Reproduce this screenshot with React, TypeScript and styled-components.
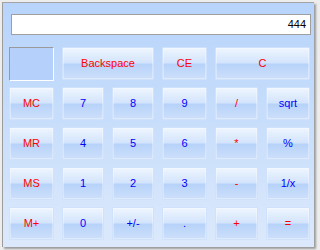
import styled, { createGlobalStyle } from "styled-components";

const GlobalStyle = createGlobalStyle`
  html, body {
    margin: 0;
    padding: 0;
    background: #ededed;
  }
  body {
    width: 320px;
    height: 250px;
    overflow: hidden;
    font-family: "Liberation Sans", Arial, sans-serif;
  }
`;

const Window = styled.div`
  box-sizing: border-box;
  margin: 2px 0 0 2px;
  width: 312px;
  height: 245px;
  padding: 11px 3px 0 6px;
  border-left: 1px solid #9c9c9c;
  border-top: 1px solid #a4a4a4;
  background: linear-gradient(180deg, #b8d4fb 0%, #c6ddfb 45%, #dce9fc 100%);
  box-shadow: 2px 2px 2px rgba(0, 0, 0, 0.35);
`;

const Display = styled.div`
  box-sizing: border-box;
  margin-left: 2px;
  height: 21px;
  border: 1px solid #9f9f9f;
  background: #ffffff;
  color: #000000;
  font-size: 11px;
  line-height: 19px;
  text-align: right;
  padding-right: 4px;
`;

const Keypad = styled.div`
  margin-top: 12px;
  display: grid;
  grid-template-columns: 45px 42px 42px 45px 43px 44px;
  grid-auto-rows: 33px;
  column-gap: 8px;
  row-gap: 7px;
`;

const MemoryBox = styled.div`
  box-sizing: border-box;
  height: 34px;
  border-top: 1px solid #9a9a9a;
  border-left: 1px solid #9a9a9a;
  border-right: 1px solid #ffffff;
  border-bottom: 1px solid #ffffff;
  background: #b4d0fb;
`;

const Key = styled.button<{ $red?: boolean; $span?: number }>`
  box-sizing: border-box;
  grid-column: span ${({ $span }) => $span ?? 1};
  margin: 0;
  padding: 0;
  border: 1px solid #cfe1fb;
  border-radius: 1px;
  box-shadow: inset 0 0 0 1px rgba(255, 255, 255, 0.35);
  background: linear-gradient(
    180deg,
    #eef5fe 0%,
    #d3e4fc 48%,
    #b7d2f9 52%,
    #cde0fb 100%
  );
  color: ${({ $red }) => ($red ? "#ff0000" : "#0000ff")};
  font-family: "Liberation Sans", Arial, sans-serif;
  font-size: 11px;
  line-height: 1;
  cursor: default;
`;

type KeyDef = { label: string; red?: boolean; span?: number };

const keys: KeyDef[] = [
  { label: "Backspace", red: true, span: 2 },
  { label: "CE", red: true },
  { label: "C", red: true, span: 2 },
  { label: "MC", red: true },
  { label: "7" },
  { label: "8" },
  { label: "9" },
  { label: "/", red: true },
  { label: "sqrt" },
  { label: "MR", red: true },
  { label: "4" },
  { label: "5" },
  { label: "6" },
  { label: "*", red: true },
  { label: "%" },
  { label: "MS", red: true },
  { label: "1" },
  { label: "2" },
  { label: "3" },
  { label: "-", red: true },
  { label: "1/x" },
  { label: "M+", red: true },
  { label: "0" },
  { label: "+/-" },
  { label: "." },
  { label: "+", red: true },
  { label: "=", red: true },
];

export default function App() {
  return (
    <>
      <GlobalStyle />
      <Window>
        <Display>444</Display>
        <Keypad>
          <MemoryBox />
          {keys.map((k) => (
            <Key key={k.label} $red={k.red} $span={k.span}>
              {k.label}
            </Key>
          ))}
        </Keypad>
      </Window>
    </>
  );
}
